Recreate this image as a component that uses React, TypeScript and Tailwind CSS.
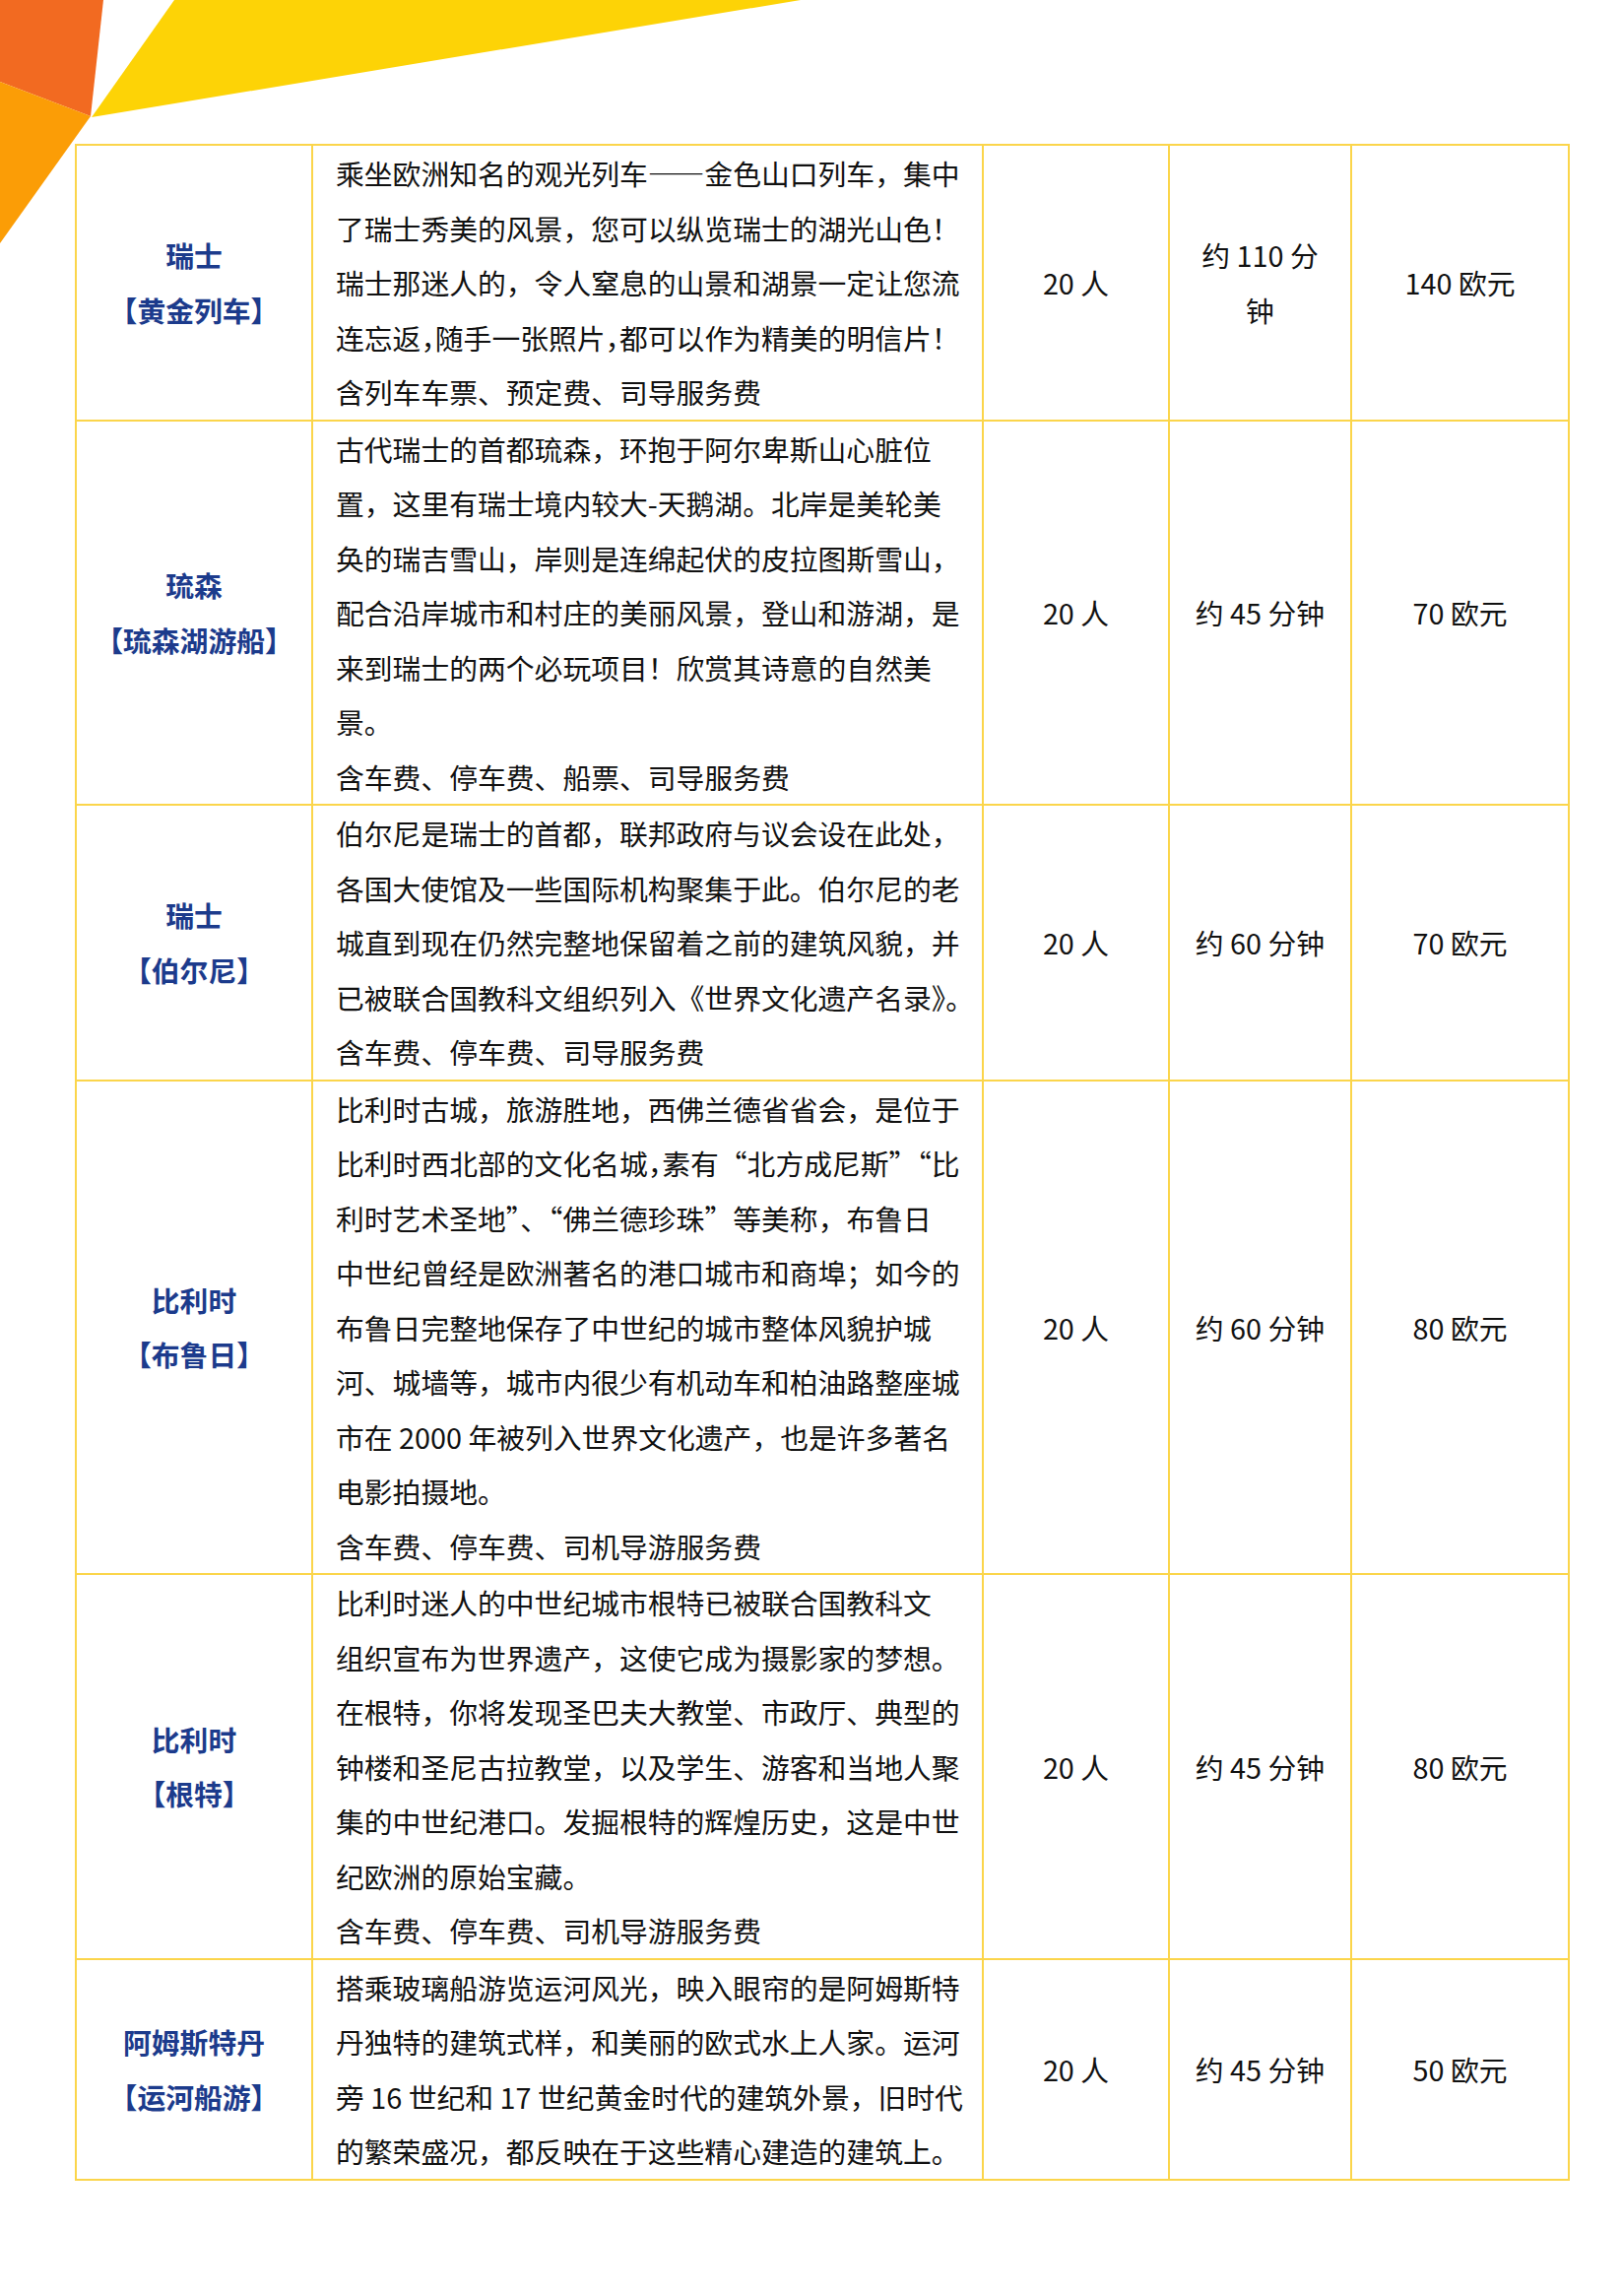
import React from "react";

type Row = {
  place: string;
  name: string;
  lines: string[];
  people: string;
  time: string[];
  price: string;
};

// "｜" marks a half-width comma (halt feature)
const rows: Row[] = [
  {
    place: "瑞士",
    name: "【黄金列车】",
    lines: [
      "乘坐欧洲知名的观光列车——金色山口列车，集中",
      "了瑞士秀美的风景，您可以纵览瑞士的湖光山色！",
      "瑞士那迷人的，令人窒息的山景和湖景一定让您流",
      "连忘返｜随手一张照片｜都可以作为精美的明信片！",
      "含列车车票、预定费、司导服务费",
    ],
    people: "20 人",
    time: ["约 110 分", "钟"],
    price: "140 欧元",
  },
  {
    place: "琉森",
    name: "【琉森湖游船】",
    lines: [
      "古代瑞士的首都琉森，环抱于阿尔卑斯山心脏位",
      "置，这里有瑞士境内较大-天鹅湖。北岸是美轮美",
      "奂的瑞吉雪山，岸则是连绵起伏的皮拉图斯雪山，",
      "配合沿岸城市和村庄的美丽风景，登山和游湖，是",
      "来到瑞士的两个必玩项目！欣赏其诗意的自然美",
      "景。",
      "含车费、停车费、船票、司导服务费",
    ],
    people: "20 人",
    time: ["约 45 分钟"],
    price: "70 欧元",
  },
  {
    place: "瑞士",
    name: "【伯尔尼】",
    lines: [
      "伯尔尼是瑞士的首都，联邦政府与议会设在此处，",
      "各国大使馆及一些国际机构聚集于此。伯尔尼的老",
      "城直到现在仍然完整地保留着之前的建筑风貌，并",
      "已被联合国教科文组织列入《世界文化遗产名录》。",
      "含车费、停车费、司导服务费",
    ],
    people: "20 人",
    time: ["约 60 分钟"],
    price: "70 欧元",
  },
  {
    place: "比利时",
    name: "【布鲁日】",
    lines: [
      "比利时古城，旅游胜地，西佛兰德省省会，是位于",
      "比利时西北部的文化名城｜素有“北方成尼斯”“比",
      "利时艺术圣地”、“佛兰德珍珠”等美称，布鲁日",
      "中世纪曾经是欧洲著名的港口城市和商埠；如今的",
      "布鲁日完整地保存了中世纪的城市整体风貌护城",
      "河、城墙等，城市内很少有机动车和柏油路整座城",
      "市在 2000 年被列入世界文化遗产，也是许多著名",
      "电影拍摄地。",
      "含车费、停车费、司机导游服务费",
    ],
    people: "20 人",
    time: ["约 60 分钟"],
    price: "80 欧元",
  },
  {
    place: "比利时",
    name: "【根特】",
    lines: [
      "比利时迷人的中世纪城市根特已被联合国教科文",
      "组织宣布为世界遗产，这使它成为摄影家的梦想。",
      "在根特，你将发现圣巴夫大教堂、市政厅、典型的",
      "钟楼和圣尼古拉教堂，以及学生、游客和当地人聚",
      "集的中世纪港口。发掘根特的辉煌历史，这是中世",
      "纪欧洲的原始宝藏。",
      "含车费、停车费、司机导游服务费",
    ],
    people: "20 人",
    time: ["约 45 分钟"],
    price: "80 欧元",
  },
  {
    place: "阿姆斯特丹",
    name: "【运河船游】",
    lines: [
      "搭乘玻璃船游览运河风光，映入眼帘的是阿姆斯特",
      "丹独特的建筑式样，和美丽的欧式水上人家。运河",
      "旁 16 世纪和 17 世纪黄金时代的建筑外景，旧时代",
      "的繁荣盛况，都反映在于这些精心建造的建筑上。",
    ],
    people: "20 人",
    time: ["约 45 分钟"],
    price: "50 欧元",
  },
];

function Line({ text }: { text: string }) {
  const parts = text.split(/([“”｜])/);
  return (
    <div className="whitespace-nowrap">
      {parts.map((p, k) => {
        if (p === "“" || p === "”")
          return (
            <span key={k} className="[font-feature-settings:'fwid']">
              {p}
            </span>
          );
        if (p === "｜")
          return (
            <span key={k} className="[font-feature-settings:'halt']">
              ，
            </span>
          );
        return <React.Fragment key={k}>{p}</React.Fragment>;
      })}
    </div>
  );
}

export default function App() {
  return (
    <div
      lang="zh-CN"
      className="relative w-[1646px] h-[2331px] bg-white overflow-hidden"
      style={{ fontFamily: '"Noto Sans CJK SC", "Noto Sans", sans-serif' }}
    >
      <svg
        className="absolute left-0 top-0"
        width="900"
        height="260"
        viewBox="0 0 900 260"
      >
        <polygon points="0,0 105,0 92,118 0,83" fill="#f26a21" />
        <polygon points="0,83 92,118 0,247" fill="#fb9d06" />
        <polygon points="177,0 813,0 93,119" fill="#fdd306" />
      </svg>

      <div className="relative pt-[146px] pl-[76px]">
        <table className="w-[1516px] border-collapse table-fixed text-[28.8px] leading-[55.5px] text-[#111]">
          <colgroup>
            <col className="w-[240px]" />
            <col className="w-[681px]" />
            <col className="w-[189px]" />
            <col className="w-[185px]" />
            <col className="w-[221px]" />
          </colgroup>
          <tbody>
            {rows.map((r, i) => (
              <tr key={i}>
                <td className="border-2 border-[#fbd54b] p-0 text-center align-middle font-bold text-[#1c3b8c]">
                  <div>{r.place}</div>
                  <div>{r.name}</div>
                </td>
                <td className="border-2 border-[#fbd54b] p-0 pl-[23px] align-top overflow-visible">
                  {r.lines.map((l, j) => (
                    <Line key={j} text={l} />
                  ))}
                </td>
                <td className="border-2 border-[#fbd54b] p-0 text-center align-middle whitespace-nowrap">
                  {r.people}
                </td>
                <td className="border-2 border-[#fbd54b] p-0 text-center align-middle whitespace-nowrap">
                  {r.time.map((t, j) => (
                    <div key={j}>{t}</div>
                  ))}
                </td>
                <td className="border-2 border-[#fbd54b] p-0 text-center align-middle whitespace-nowrap">
                  {r.price}
                </td>
              </tr>
            ))}
          </tbody>
        </table>
      </div>
    </div>
  );
}
